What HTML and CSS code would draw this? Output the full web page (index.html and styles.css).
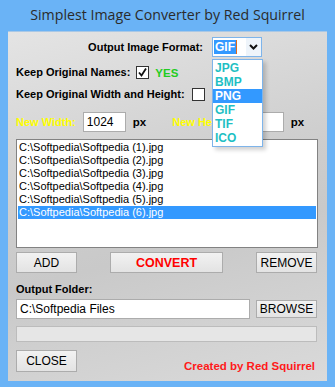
FILE: index.html
```html
<!DOCTYPE html>
<html lang="en">
<head>
  <meta charset="UTF-8" />
  <title>Simplest Image Converter by Red Squirrel</title>
  <link rel="stylesheet" href="styles.css">
</head>
<body>
  <div class="window">
    <div class="title_bar">Simplest Image Converter by Red Squirrel</div>
    <div class="client">

      <div class="row format_row">
        <span class="label format_label">Output Image Format:</span>
        <div class="combo">
          <div class="combo_text"><span class="sel">GIF</span><span class="caret"></span></div>
          <div class="combo_btn">
            <svg width="9" height="6" viewBox="0 0 9 6"><path d="M1 1 L4.5 4.5 L8 1" fill="none" stroke="#111" stroke-width="2"/></svg>
          </div>
        </div>
      </div>

      <div class="row names_row">
        <span class="label">Keep Original Names:</span>
        <span class="check">
          <svg width="11" height="11" viewBox="0 0 11 11"><path d="M2 5.5 L4.5 8.5 L9 1.5" fill="none" stroke="#111" stroke-width="1.8"/></svg>
        </span>
        <span class="yes">YES</span>
      </div>

      <div class="row size_row">
        <span class="label">Keep Original Width and Height:</span>
        <span class="check"></span>
      </div>

      <div class="row dims_row">
        <span class="label yellow">New Width:</span>
        <input class="field w_field" type="text" value="1024">
        <span class="label px">px</span>
        <span class="label yellow h_label">New Height:</span>
        <input class="field h_field" type="text" value="768">
        <span class="label px">px</span>
      </div>

      <div class="file_list">
        <div class="item">C:\Softpedia\Softpedia (1).jpg</div>
        <div class="item">C:\Softpedia\Softpedia (2).jpg</div>
        <div class="item">C:\Softpedia\Softpedia (3).jpg</div>
        <div class="item">C:\Softpedia\Softpedia (4).jpg</div>
        <div class="item">C:\Softpedia\Softpedia (5).jpg</div>
        <div class="item selected">C:\Softpedia\Softpedia (6).jpg</div>
      </div>

      <div class="row btn_row">
        <button class="btn small_btn">ADD</button>
        <button class="btn convert_btn">CONVERT</button>
        <button class="btn small_btn">REMOVE</button>
      </div>

      <div class="label folder_label">Output Folder:</div>
      <div class="row folder_row">
        <input class="field folder_field" type="text" value="C:\Softpedia Files">
        <button class="btn browse_btn">BROWSE</button>
      </div>

      <div class="progress"></div>

      <div class="row bottom_row">
        <button class="btn close_btn">CLOSE</button>
        <span class="credit">Created by Red Squirrel</span>
      </div>

      <div class="drop_list">
        <div class="opt">JPG</div>
        <div class="opt">BMP</div>
        <div class="opt active">PNG</div>
        <div class="opt">GIF</div>
        <div class="opt">TIF</div>
        <div class="opt">ICO</div>
      </div>
    </div>
  </div>
</body>
</html>
```

FILE: styles.css
```css
body {
  margin: 0;
  background: #6ab3f6;
  font-family: 'Liberation Sans', Arial, sans-serif;
  font-size: 12px;
  color: #000;
}
.window {
  width: 335px;
  height: 387px;
  box-sizing: border-box;
  padding: 0 8px 6px 8px;
  background: #6ab3f6;
  display: flex;
  flex-direction: column;
}
.title_bar {
  height: 31px;
  line-height: 30px;
  text-align: center;
  font-family: 'Open Sans', 'Noto Sans', sans-serif;
  font-size: 14.2px;
  color: #2b2b2b;
}
.client {
  position: relative;
  flex: 1;
  box-sizing: border-box;
  padding: 5px 10px 0 8px;
  background: linear-gradient(165deg, #e4e4e4 0%, #cdcdcd 45%, #c9c9c9 60%, #dadada 100%);
  border-top: 1px solid #a9c8e6;
  overflow: hidden;
}
.row {
  display: flex;
  align-items: center;
}
.label {
  font-weight: bold;
  font-size: 11px;
  line-height: 13px;
  white-space: nowrap;
}
.format_row {
  height: 20px;
  gap: 9px;
}
.format_label {
  width: 187px;
  text-align: right;
}
.combo {
  display: flex;
  width: 50px;
  height: 20px;
  box-sizing: border-box;
  border: 1px solid #7eb4ea;
  background: #fff;
}
.combo_text {
  flex: 1;
  display: flex;
  align-items: center;
  padding-left: 1px;
}
.sel {
  background: #3399ff;
  color: #fff;
  font-weight: bold;
  font-size: 12px;
  line-height: 14px;
  padding: 0 1px;
}
.caret {
  width: 1px;
  height: 14px;
  background: #e06a1a;
}
.combo_btn {
  width: 15px;
  display: flex;
  align-items: center;
  justify-content: center;
  background: #eef4fa;
}
.names_row {
  margin-top: 9px;
  height: 13px;
}
.names_row .label {
  margin-right: 6px;
}
.check {
  width: 13px;
  height: 13px;
  box-sizing: border-box;
  border: 1px solid #333;
  background: #fff;
  display: flex;
  align-items: center;
  justify-content: center;
}
.yes {
  margin-left: 6px;
  color: #22cc22;
  font-weight: bold;
  font-size: 11.5px;
}
.size_row {
  margin-top: 9px;
  height: 13px;
}
.size_row .label {
  margin-right: 7px;
}
.dims_row {
  margin-top: 11px;
  height: 20px;
}
.yellow {
  color: #ffff00;
}
.field {
  box-sizing: border-box;
  height: 20px;
  border: 1px solid #acacac;
  background: #fff;
  font-family: 'Liberation Sans', Arial, sans-serif;
  font-size: 12px;
  padding: 0 3px;
  margin: 0;
  outline: none;
}
.w_field {
  width: 43px;
  margin-left: 7px;
}
.px {
  margin-left: 7px;
  font-size: 11.5px;
}
.h_label {
  margin-left: 26px;
}
.h_field {
  width: 46px;
  margin-left: 2px;
}
.file_list {
  margin-top: 7px;
  width: 302px;
  height: 109px;
  box-sizing: border-box;
  border: 1px solid #828282;
  background: #fff;
  padding: 1px 1px 0 1px;
}
.item {
  height: 13px;
  line-height: 13px;
  font-size: 11px;
  padding-left: 1px;
  color: #000;
  white-space: nowrap;
}
.item.selected {
  background: #3399ff;
  color: #fff;
}
.btn_row {
  margin-top: 4px;
  justify-content: space-between;
}
.btn {
  box-sizing: border-box;
  height: 21px;
  border: 1px solid #acacac;
  background: linear-gradient(#f2f2f2, #e3e3e3);
  font-family: 'Liberation Sans', Arial, sans-serif;
  font-size: 12px;
  color: #000;
  padding: 0;
  margin: 0;
}
.small_btn {
  width: 61px;
}
.convert_btn {
  width: 113px;
  color: #ff0000;
  font-weight: bold;
  font-size: 12.5px;
}
.folder_label {
  margin-top: 10px;
  height: 13px;
}
.folder_row {
  margin-top: 3px;
  justify-content: space-between;
}
.folder_field {
  width: 234px;
}
.browse_btn {
  width: 61px;
  height: 18px;
}
.progress {
  margin-top: 7px;
  width: 301px;
  height: 16px;
  box-sizing: border-box;
  border: 1px solid #bcbcbc;
  background: #e6e6e6;
}
.bottom_row {
  margin-top: 8px;
  justify-content: space-between;
}
.close_btn {
  width: 61px;
  height: 22px;
}
.credit {
  margin-top: 10px;
  margin-right: 2px;
  color: #ff1a1a;
  font-weight: bold;
  font-size: 11.5px;
}
.drop_list {
  position: absolute;
  left: 204px;
  top: 27px;
  width: 51px;
  box-sizing: border-box;
  border: 1px solid #7eb4ea;
  background: #fff;
  padding: 1px 0 1px 0;
  box-shadow: 3px 3px 4px rgba(0, 0, 0, 0.18);
}
.opt {
  height: 14px;
  line-height: 14px;
  padding-left: 2px;
  font-weight: bold;
  font-size: 12px;
  color: #1fbfc4;
}
.opt.active {
  background: #3399ff;
  color: #fff;
}
```
